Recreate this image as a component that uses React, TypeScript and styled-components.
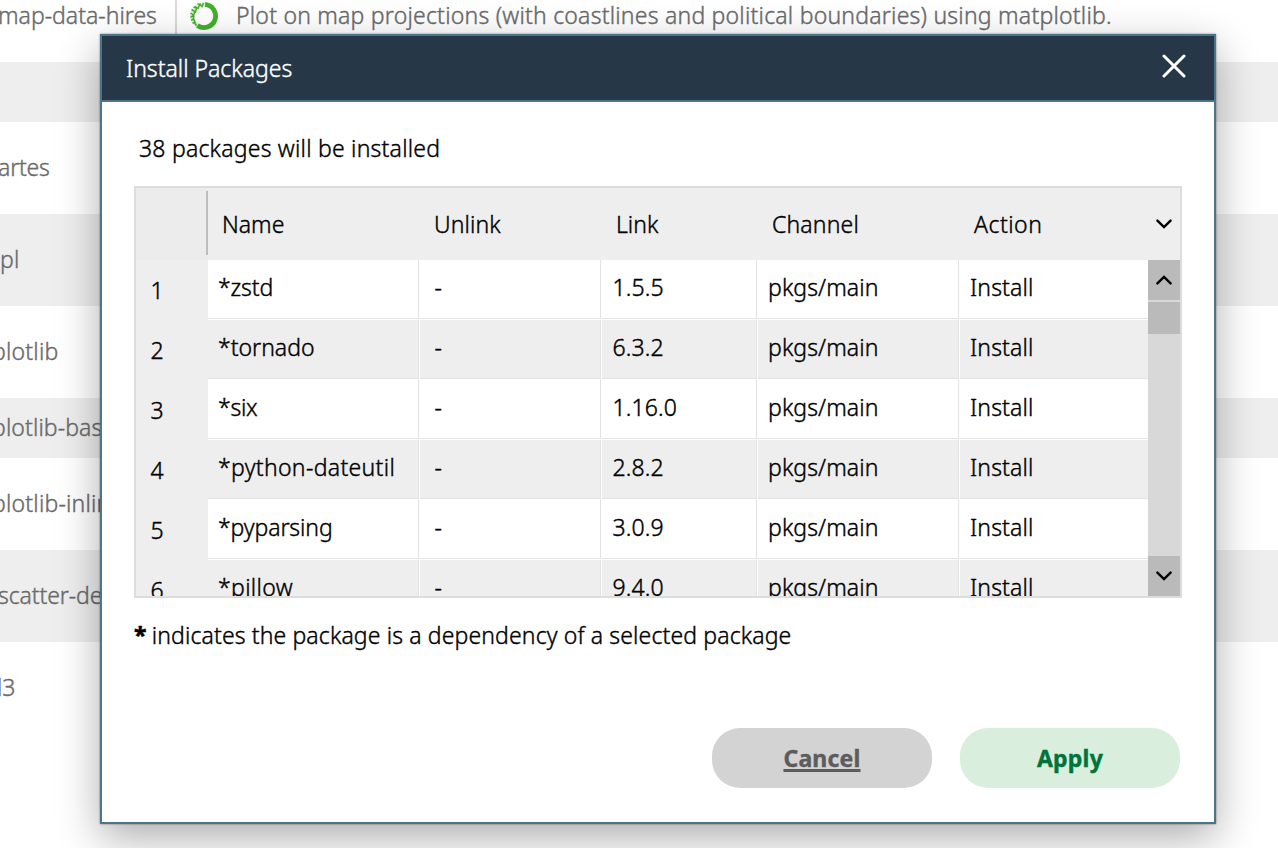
import React from 'react';
import styled, { createGlobalStyle } from 'styled-components';

const GlobalStyle = createGlobalStyle`
  * { box-sizing: border-box; }
  body {
    margin: 0;
    background: #fff;
    overflow: hidden;
    font-family: "Noto Sans", "Open Sans", sans-serif;
    font-weight: 300;
    font-size: 23px;
    line-height: 30px;
    color: #000;
    -webkit-text-stroke: 0.4px currentColor;
  }
`;

const Screen = styled.div`
  position: relative;
  width: 1278px;
  height: 848px;
  overflow: hidden;
  background: #fff;
`;

/* Package list behind the dialog */
const PackageList = styled.div`
  margin-top: -30px;
  color: #6a6a6a;
`;

const PackageRow = styled.div<{ $height: number; $shaded?: boolean }>`
  display: flex;
  align-items: center;
  height: ${p => p.$height}px;
  background: ${p => (p.$shaded ? '#eeeeee' : '#ffffff')};
  white-space: nowrap;
`;

const PackageName = styled.div<{ $start: number; $tracking?: number }>`
  width: 175px;
  flex: none;
  padding-bottom: 2px;
  text-indent: ${p => p.$start}px;
  letter-spacing: ${p => p.$tracking ?? 0}px;
`;

const PackageDetails = styled.div`
  display: flex;
  align-items: center;
  align-self: stretch;
  gap: 17px;
  padding-left: 12px;
  border-left: 2px solid #d9d9d9;
`;

const Description = styled.div`
  padding-bottom: 2px;
  letter-spacing: 0.22px;
`;

/* Dialog */
const Dialog = styled.section`
  position: absolute;
  left: 100px;
  top: 34px;
  width: 1116px;
  height: 790px;
  display: flex;
  flex-direction: column;
  background: #fff;
  border: 2px solid #4d758a;
  box-shadow: 0 0 2px rgba(0, 0, 0, 0.45), 0 14px 40px rgba(0, 0, 0, 0.32);
`;

const DialogHeader = styled.header`
  display: flex;
  align-items: center;
  justify-content: space-between;
  height: 66px;
  padding: 0 28px 0 24px;
  background: #263747;
  border-bottom: 2px solid #4d758a;
  color: #fff;
`;

const CloseIcon = styled.svg`
  width: 24px;
  height: 24px;
  display: block;
  margin-bottom: 4px;
  stroke: #fff;
  stroke-width: 3;
  stroke-linecap: round;
`;

const DialogBody = styled.div`
  flex: 1;
  display: flex;
  flex-direction: column;
  padding: 31px 32px 34px;
`;

const Summary = styled.p`
  margin: 0 0 23px 5px;
  letter-spacing: 0.22px;
`;

const Table = styled.div`
  display: flex;
  flex-direction: column;
  height: 412px;
  border: 2px solid #dcdcdc;
  background: #fff;
  overflow: hidden;
`;

const TableHeader = styled.div`
  display: grid;
  grid-template-columns: 72px 212px 182px 156px 202px 1fr 32px;
  align-items: center;
  height: 72px;
  flex: none;
  background: #eeeeee;
`;

const Corner = styled.div`
  height: 100%;
  display: flex;
  justify-content: flex-end;
  padding: 3px 0 5px;
  background: #ececec;
`;

const CornerRule = styled.div`
  width: 2px;
  background: #bdbdbd;
`;

const ColumnTitle = styled.div<{ $tracking?: number }>`
  padding: 0 0 1px 14px;
  letter-spacing: ${p => p.$tracking ?? 0}px;
`;

const TableBody = styled.div`
  display: flex;
  flex: 1;
  min-height: 0;
`;

const Rows = styled.div`
  flex: 1;
  overflow: hidden;
`;

const Row = styled.div`
  display: grid;
  grid-template-columns: 72px 212px 182px 156px 202px 1fr;
  height: 60px;
`;

const RowNumber = styled.div`
  display: flex;
  align-items: center;
  padding: 0 0 0 14.5px;
  background: #eeeeee;
`;

const Cell = styled.div<{ $shaded: boolean; $last?: boolean; $tracking?: number; $indent?: number }>`
  display: flex;
  align-items: center;
  height: 59px;
  margin-right: ${p => (p.$last ? 0 : 1)}px;
  padding: 0 0 4px ${p => p.$indent ?? 10}px;
  border-right: ${p => (p.$last ? 'none' : '1px solid #e2e2e2')};
  border-bottom: 1px solid #e2e2e2;
  background: ${p => (p.$shaded ? '#eeeeee' : '#ffffff')};
  letter-spacing: ${p => p.$tracking ?? 0}px;
  white-space: nowrap;
`;

const Scrollbar = styled.div`
  display: flex;
  flex-direction: column;
  width: 32px;
  background: #d8d8d8;
`;

const ScrollButton = styled.div`
  display: flex;
  align-items: center;
  justify-content: center;
  height: 40px;
  background: #bababa;
`;

const ScrollThumb = styled.div`
  height: 32px;
  margin: 2px 0 auto;
  background: #bababa;
`;

const ChevronSvg = styled.svg<{ $up?: boolean }>`
  display: block;
  width: 16px;
  height: 10px;
  fill: none;
  stroke: #000;
  stroke-width: 2.4;
  stroke-linecap: round;
  transform: ${p => (p.$up ? 'rotate(180deg)' : 'none')};
`;

const ChevronSlot = styled.div`
  display: flex;
  justify-content: center;
`;

const Footnote = styled.p`
  margin: 22px 0 0;
  letter-spacing: 0.13px;
`;

const Star = styled.b`
  margin-right: -1px;
  font-weight: 800;
`;

const Actions = styled.footer`
  display: flex;
  justify-content: flex-end;
  gap: 28px;
  margin: auto 2px 0 0;
`;

const Button = styled.button<{ $primary?: boolean }>`
  display: flex;
  align-items: center;
  justify-content: center;
  width: 220px;
  height: 60px;
  padding: 0 0 1px;
  border: 0;
  border-radius: 28px;
  background: ${p => (p.$primary ? '#d9eedc' : '#d3d3d3')};
  color: ${p => (p.$primary ? '#00733b' : '#5c5c5c')};
  font: 700 23px/30px "Noto Sans", sans-serif;
  letter-spacing: 0.2px;
  text-decoration: ${p => (p.$primary ? 'none' : 'underline')};
  text-decoration-thickness: 3px;
  text-underline-offset: 2px;
  text-decoration-skip-ink: none;
`;

const Chevron = ({ up }: { up?: boolean }) => (
  <ChevronSvg viewBox="0 0 16 10" $up={up}>
    <path d="M1.4 1.6 8 8.1l6.6-6.5" />
  </ChevronSvg>
);

/* Ring whose left side breaks up into a lattice of small triangles */
const RingLogo = () => (
  <svg width="30" height="30" viewBox="0 0 30 30" fill="none" stroke="#43b02a">
    <path d="M16 3.4A11.6 11.6 0 1 1 8.4 24.5" strokeWidth="4.9" />
    <path d="M8.2 24.5A11.6 11.6 0 0 1 16 3.4" strokeWidth="4.4" opacity="0.18" />
    <path
      d="M1.5 12l3 2-3 2.5M2.5 8.5l4 2.5 1-4-3-1M6 5.5l3 2 1.5-3.5-2-1.5M10.5 2.5l2.5 3 1.5-3.5M5 14.5l-1 4M2 19l3-.5 1 3-2.5.5M5.5 11l-.5 3M5.5 21.5l2 3"
      strokeWidth="1.5"
    />
  </svg>
);

const packages = [
  { name: 'map-data-hires', start: -2, height: 92, about: 'Plot on map projections (with coastlines and political boundaries) using matplotlib.' },
  { name: '', start: 0, height: 60 },
  { name: 'artes', start: -2, height: 92, tracking: -0.2 },
  { name: 'pl', start: 0, height: 92, tracking: 0.3 },
  { name: 'plotlib', start: -8, height: 92, tracking: 0.2 },
  { name: 'plotlib-bas', start: -8, height: 60, tracking: 0.1 },
  { name: 'plotlib-inlin', start: -8, height: 92, tracking: 0.2 },
  { name: 'scatter-de', start: -2, height: 92, tracking: -0.1 },
  { name: 'd3', start: -11.5, height: 92 },
];

const titles: [string, number][] = [
  ['Name', 0],
  ['Unlink', 0.1],
  ['Link', 0],
  ['Channel', 0.15],
  ['Action', 0.5],
];

const rows: [string, number, string][] = [
  ['*zstd', -0.1, '1.5.5'],
  ['*tornado', 0, '6.3.2'],
  ['*six', -0.25, '1.16.0'],
  ['*python-dateutil', 0.33, '2.8.2'],
  ['*pyparsing', -0.1, '3.0.9'],
  ['*pillow', 0.35, '9.4.0'],
];

export default function App() {
  return (
    <Screen>
      <GlobalStyle />
      <PackageList>
        {packages.map((p, i) => (
          <PackageRow key={i} $height={p.height} $shaded={i % 2 === 1}>
            <PackageName $start={p.start} $tracking={p.tracking}>{p.name}</PackageName>
            {p.about && (
              <PackageDetails>
                <RingLogo />
                <Description>{p.about}</Description>
              </PackageDetails>
            )}
          </PackageRow>
        ))}
      </PackageList>

      <Dialog>
        <DialogHeader>
          <span>Install Packages</span>
          <CloseIcon viewBox="0 0 24 24">
            <path d="M2 2 22 22M22 2 2 22" />
          </CloseIcon>
        </DialogHeader>
        <DialogBody>
          <Summary>38 packages will be installed</Summary>
          <Table>
            <TableHeader>
              <Corner><CornerRule /></Corner>
              {titles.map(([title, tracking]) => (
                <ColumnTitle key={title} $tracking={tracking}>{title}</ColumnTitle>
              ))}
              <ChevronSlot><Chevron /></ChevronSlot>
            </TableHeader>
            <TableBody>
              <Rows>
                {rows.map(([name, tracking, link], i) => {
                  const shaded = i % 2 === 1;
                  return (
                    <Row key={name}>
                      <RowNumber>{i + 1}</RowNumber>
                      <Cell $shaded={shaded} $tracking={tracking}>{name}</Cell>
                      <Cell $shaded={shaded} $indent={14.5}>-</Cell>
                      <Cell $shaded={shaded} $indent={10.5} $tracking={0.15}>{link}</Cell>
                      <Cell $shaded={shaded} $tracking={0.1}>pkgs/main</Cell>
                      <Cell $shaded={shaded} $tracking={0.15} $last>Install</Cell>
                    </Row>
                  );
                })}
              </Rows>
              <Scrollbar>
                <ScrollButton><Chevron up /></ScrollButton>
                <ScrollThumb />
                <ScrollButton><Chevron /></ScrollButton>
              </Scrollbar>
            </TableBody>
          </Table>
          <Footnote><Star>*</Star> indicates the package is a dependency of a selected package</Footnote>
          <Actions>
            <Button>Cancel</Button>
            <Button $primary>Apply</Button>
          </Actions>
        </DialogBody>
      </Dialog>
    </Screen>
  );
}
